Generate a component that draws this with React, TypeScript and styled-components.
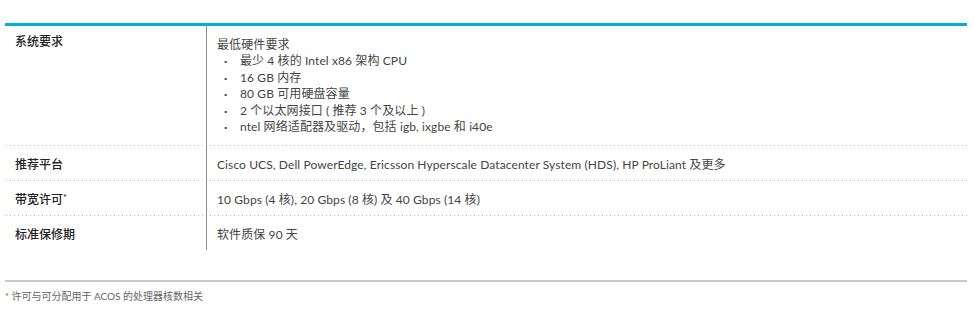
import React from "react";
import styled, { createGlobalStyle } from "styled-components";

const GlobalStyle = createGlobalStyle`
  html, body {
    margin: 0;
    padding: 0;
    background: #fff;
  }
  body {
    font-family: Lato, "Noto Sans CJK SC", sans-serif;
    color: #444;
  }
`;

const Root = styled.div`
  width: 962px;
  margin-left: 5px;
  padding-top: 23px;
`;

const SpecTable = styled.div`
  border-top: 3px solid #00b0d8;
  padding-bottom: 30px;
  border-bottom: 2px solid #ccc8c4;
`;

const SpecRow = styled.div<{ $first?: boolean; $last?: boolean }>`
  display: grid;
  grid-template-columns: 202px 1fr;
  height: ${(p) => (p.$first ? "120px" : p.$last ? "34px" : "35px")};
  box-sizing: border-box;
  background-image: ${(p) =>
    p.$last ? "none" : "linear-gradient(to right, #bcbcbc 1px, transparent 1px)"};
  background-size: 4px 1px;
  background-repeat: repeat-x;
  background-position: 1px bottom;
`;

const Label = styled.div<{ $first?: boolean }>`
  padding: ${(p) => (p.$first ? "8px" : "11px")} 0 0 10px;
  font-size: 12px;
  line-height: 16px;
  font-weight: 500;
  color: #222;
  border-right: 1px solid #8c8c8c;
`;

const Sup = styled.span`
  font-size: 9px;
  vertical-align: top;
  line-height: 12px;
`;

const Value = styled.div<{ $first?: boolean }>`
  padding: ${(p) => (p.$first ? "11px" : "11px")} 0 0 10px;
  font-size: 12px;
  line-height: 16.4px;
  letter-spacing: 0.1px;
  color: #444;
`;

const BulletList = styled.ul`
  list-style: none;
  margin: 0;
  padding: 0;

  li {
    position: relative;
    padding-left: 23px;
  }

  li::before {
    content: "·";
    position: absolute;
    left: 7px;
    top: 0;
    font-weight: 700;
  }
`;

const Footnote = styled.div`
  padding-top: 7px;
  font-size: 10px;
  line-height: 14px;
  color: #666;
`;

const Star = styled.span`
  font-size: 9px;
`;

type Row = {
  label: string;
  note?: boolean;
  value: React.ReactNode;
};

const hardware = [
  "最少 4 核的 Intel x86 架构 CPU",
  "16 GB 内存",
  "80 GB 可用硬盘容量",
  "2 个以太网接口 ( 推荐 3 个及以上 )",
  "ntel 网络适配器及驱动，包括 igb, ixgbe 和 i40e",
];

const rows: Row[] = [
  {
    label: "系统要求",
    value: (
      <>
        <div>最低硬件要求</div>
        <BulletList>
          {hardware.map((item) => (
            <li key={item}>{item}</li>
          ))}
        </BulletList>
      </>
    ),
  },
  {
    label: "推荐平台",
    value:
      "Cisco UCS, Dell PowerEdge, Ericsson Hyperscale Datacenter System (HDS), HP ProLiant 及更多",
  },
  {
    label: "带宽许可",
    note: true,
    value: "10 Gbps (4 核), 20 Gbps (8 核) 及 40 Gbps (14 核)",
  },
  { label: "标准保修期", value: "软件质保 90 天" },
];

export default function App() {
  return (
    <>
      <GlobalStyle />
      <Root>
        <SpecTable>
          {rows.map((row, i) => (
            <SpecRow key={row.label} $first={i === 0} $last={i === rows.length - 1}>
              <Label $first={i === 0}>
                {row.label}
                {row.note && <Sup>*</Sup>}
              </Label>
              <Value $first={i === 0}>{row.value}</Value>
            </SpecRow>
          ))}
        </SpecTable>
        <Footnote>
          <Star>*</Star> 许可与可分配用于 ACOS 的处理器核数相关
        </Footnote>
      </Root>
    </>
  );
}
